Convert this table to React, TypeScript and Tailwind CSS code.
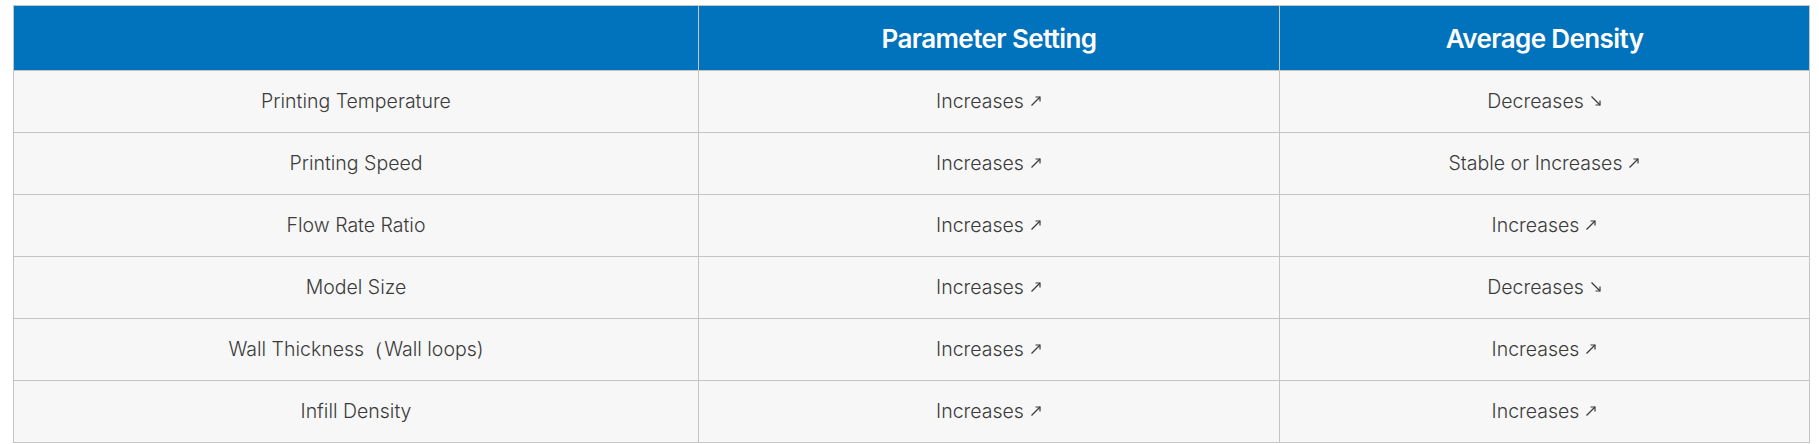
import React from "react";

type Dir = "up" | "down";

const rows: [string, [string, Dir], [string, Dir]][] = [
  ["Printing Temperature", ["Increases", "up"], ["Decreases", "down"]],
  ["Printing Speed", ["Increases", "up"], ["Stable or Increases", "up"]],
  ["Flow Rate Ratio", ["Increases", "up"], ["Increases", "up"]],
  ["Model Size", ["Increases", "up"], ["Decreases", "down"]],
  ["Wall Thickness（Wall loops)", ["Increases", "up"], ["Increases", "up"]],
  ["Infill Density", ["Increases", "up"], ["Increases", "up"]],
];

function Arrow({ dir }: { dir: Dir }) {
  return (
    <svg
      width="12"
      height="12"
      viewBox="0 0 12 12"
      className="inline-block ml-[6px] align-[1px]"
      fill="none"
      stroke="#3b3b3b"
      strokeWidth="1.2"
    >
      {dir === "up" ? (
        <>
          <path d="M1.5 10.5 L10 2" />
          <path d="M5.5 2 L10 2 L10 6.5" />
        </>
      ) : (
        <>
          <path d="M1.5 1.5 L10 10" />
          <path d="M5.5 10 L10 10 L10 5.5" />
        </>
      )}
    </svg>
  );
}

export default function App() {
  return (
    <div className="w-[1819px] h-[444px] bg-white pl-[13px] pt-[5px] font-['Inter',sans-serif]">
      <table className="w-[1796px] table-fixed border-collapse border border-[#c4c4c4]">
        <colgroup>
          <col className="w-[685px]" />
          <col className="w-[581px]" />
          <col className="w-[530px]" />
        </colgroup>
        <thead>
          <tr className="h-[65px] bg-[#0172bc] text-white">
            <th className="border border-[#c4c4c4]"></th>
            <th className="border border-[#c4c4c4] text-[26px] font-semibold tracking-[-0.6px]">
              Parameter Setting
            </th>
            <th className="border border-[#c4c4c4] text-[26px] font-semibold tracking-[-0.6px]">
              Average Density
            </th>
          </tr>
        </thead>
        <tbody>
          {rows.map((r, i) => (
            <tr key={i} className="h-[62px] bg-[#f7f7f7] text-[#3b3b3b] text-[19.5px] font-[350]">
              <td className="border border-[#c4c4c4] text-center align-middle">{r[0]}</td>
              <td className="border border-[#c4c4c4] text-center align-middle">
                {r[1][0]}
                <Arrow dir={r[1][1]} />
              </td>
              <td className="border border-[#c4c4c4] text-center align-middle">
                {r[2][0]}
                <Arrow dir={r[2][1]} />
              </td>
            </tr>
          ))}
        </tbody>
      </table>
    </div>
  );
}
